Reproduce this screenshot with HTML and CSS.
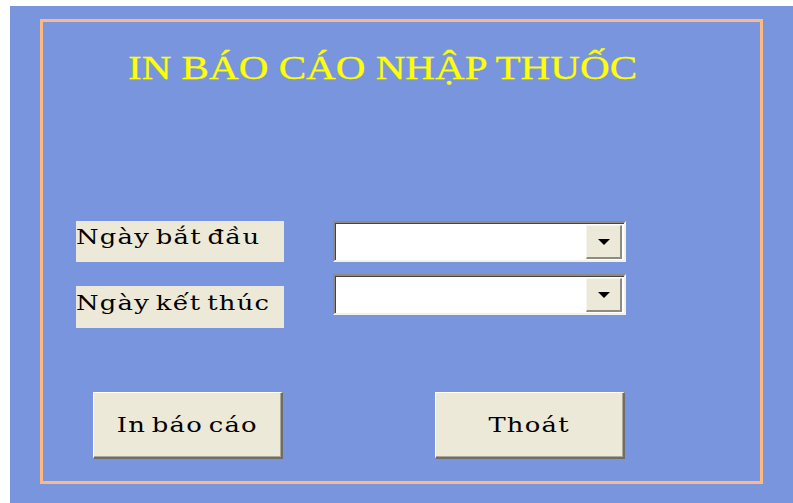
FILE: index.html
```html
<!DOCTYPE html>
<html lang="vi">
<head>
<meta charset="utf-8">
<title>In báo cáo nhập thuốc</title>
<link rel="stylesheet" href="styles.css">
</head>
<body>
<div class="form">
  <div class="frame">
    <h1 class="title">IN BÁO CÁO NHẬP THUỐC</h1>
    <div class="fields">
      <div class="labels">
        <div class="label label-start"><span class="wide">Ngày bắt đầu</span></div>
        <div class="label label-end"><span class="wide">Ngày kết thúc</span></div>
      </div>
      <div class="combos">
        <div class="combo"><span class="combo-text"></span><span class="combo-btn"><span class="arrow"></span></span></div>
        <div class="combo"><span class="combo-text"></span><span class="combo-btn"><span class="arrow"></span></span></div>
      </div>
    </div>
    <div class="actions">
      <button class="btn" type="button"><span class="wide">In báo cáo</span></button>
      <button class="btn" type="button"><span class="wide">Thoát</span></button>
    </div>
  </div>
</div>
</body>
</html>
```

FILE: styles.css
```css
html, body {
  margin: 0;
  padding: 0;
  background: #ffffff;
  height: 100%;
  overflow: hidden;
}

.form {
  margin: 6px 0 0 10px;
  height: 497px;
  background: #7895dd;
  padding: 13px 0 0 30px;
  box-sizing: border-box;
}

.frame {
  width: 723px;
  height: 465px;
  box-sizing: border-box;
  border: 3px solid #fdb984;
  display: flex;
  flex-direction: column;
}

/* heading is drawn in a wide serif, stretched horizontally */
.title {
  align-self: flex-start;
  margin: 27px 0 0 85px;
  font-family: "Liberation Serif", "Times New Roman", serif;
  font-weight: normal;
  font-size: 33px;
  line-height: 38px;
  color: #ffff00;
  white-space: nowrap;
  transform: scaleX(1.245);
  transform-origin: left center;
  -webkit-text-stroke: 0.3px #ffff00;
}

/* control captions use a slab serif stretched a little wider */
.wide {
  display: inline-block;
  transform: scaleX(1.23);
  transform-origin: left center;
}

.btn .wide {
  transform-origin: center center;
}

.fields {
  display: flex;
  margin: 0 0 0 33px;
}

.labels {
  display: flex;
  flex-direction: column;
  gap: 24px;
  margin-top: 134px;
}

.label {
  width: 208px;
  height: 41px;
  background: #ece9d8;
  font-family: "DejaVu Serif", "Liberation Serif", serif;
  font-size: 21px;
  letter-spacing: 1px;
  word-spacing: -3px;
  color: #000;
  box-sizing: border-box;
  padding-top: 3px;
  line-height: 26px;
  white-space: nowrap;
}

.label-end {
  height: 42px;
  padding-top: 4px;
}

.combos {
  display: flex;
  flex-direction: column;
  gap: 12px;
  margin: 134px 0 0 49px;
}

.combo {
  width: 293px;
  height: 41px;
  box-sizing: border-box;
  background: #ffffff;
  border-top: 2px solid #8d8b82;
  border-left: 2px solid #8d8b82;
  border-right: 2px solid #f4f2e8;
  border-bottom: 2px solid #f4f2e8;
  box-shadow: inset 1px 1px 0 #45443f;
  display: flex;
  align-items: stretch;
  padding: 2px 2px 1px 0;
}

.combo-text {
  flex: 1;
}

.combo-btn {
  width: 36px;
  box-sizing: border-box;
  background: #ece9d8;
  border-top: 1px solid #f6f5ee;
  border-left: 1px solid #f6f5ee;
  border-right: 2px solid #8d8b82;
  border-bottom: 2px solid #8d8b82;
  display: flex;
  align-items: center;
  justify-content: center;
}

.arrow {
  width: 0;
  height: 0;
  border-left: 6px solid transparent;
  border-right: 6px solid transparent;
  border-top: 6px solid #000;
  margin-top: 1px;
}

.actions {
  display: flex;
  gap: 152px;
  margin: 64px 0 0 50px;
}

.btn {
  width: 190px;
  height: 67px;
  box-sizing: border-box;
  margin: 0;
  padding: 0;
  background: #ece9d8;
  border-top: 1px solid #ffffff;
  border-left: 1px solid #ffffff;
  border-right: 2px solid #6f6d66;
  border-bottom: 2px solid #6f6d66;
  box-shadow: inset -1px -1px 0 #aca899;
  font-family: "DejaVu Serif", "Liberation Serif", serif;
  font-size: 21px;
  line-height: 26px;
  letter-spacing: 1px;
  word-spacing: -3px;
  color: #000;
  cursor: default;
}
```
